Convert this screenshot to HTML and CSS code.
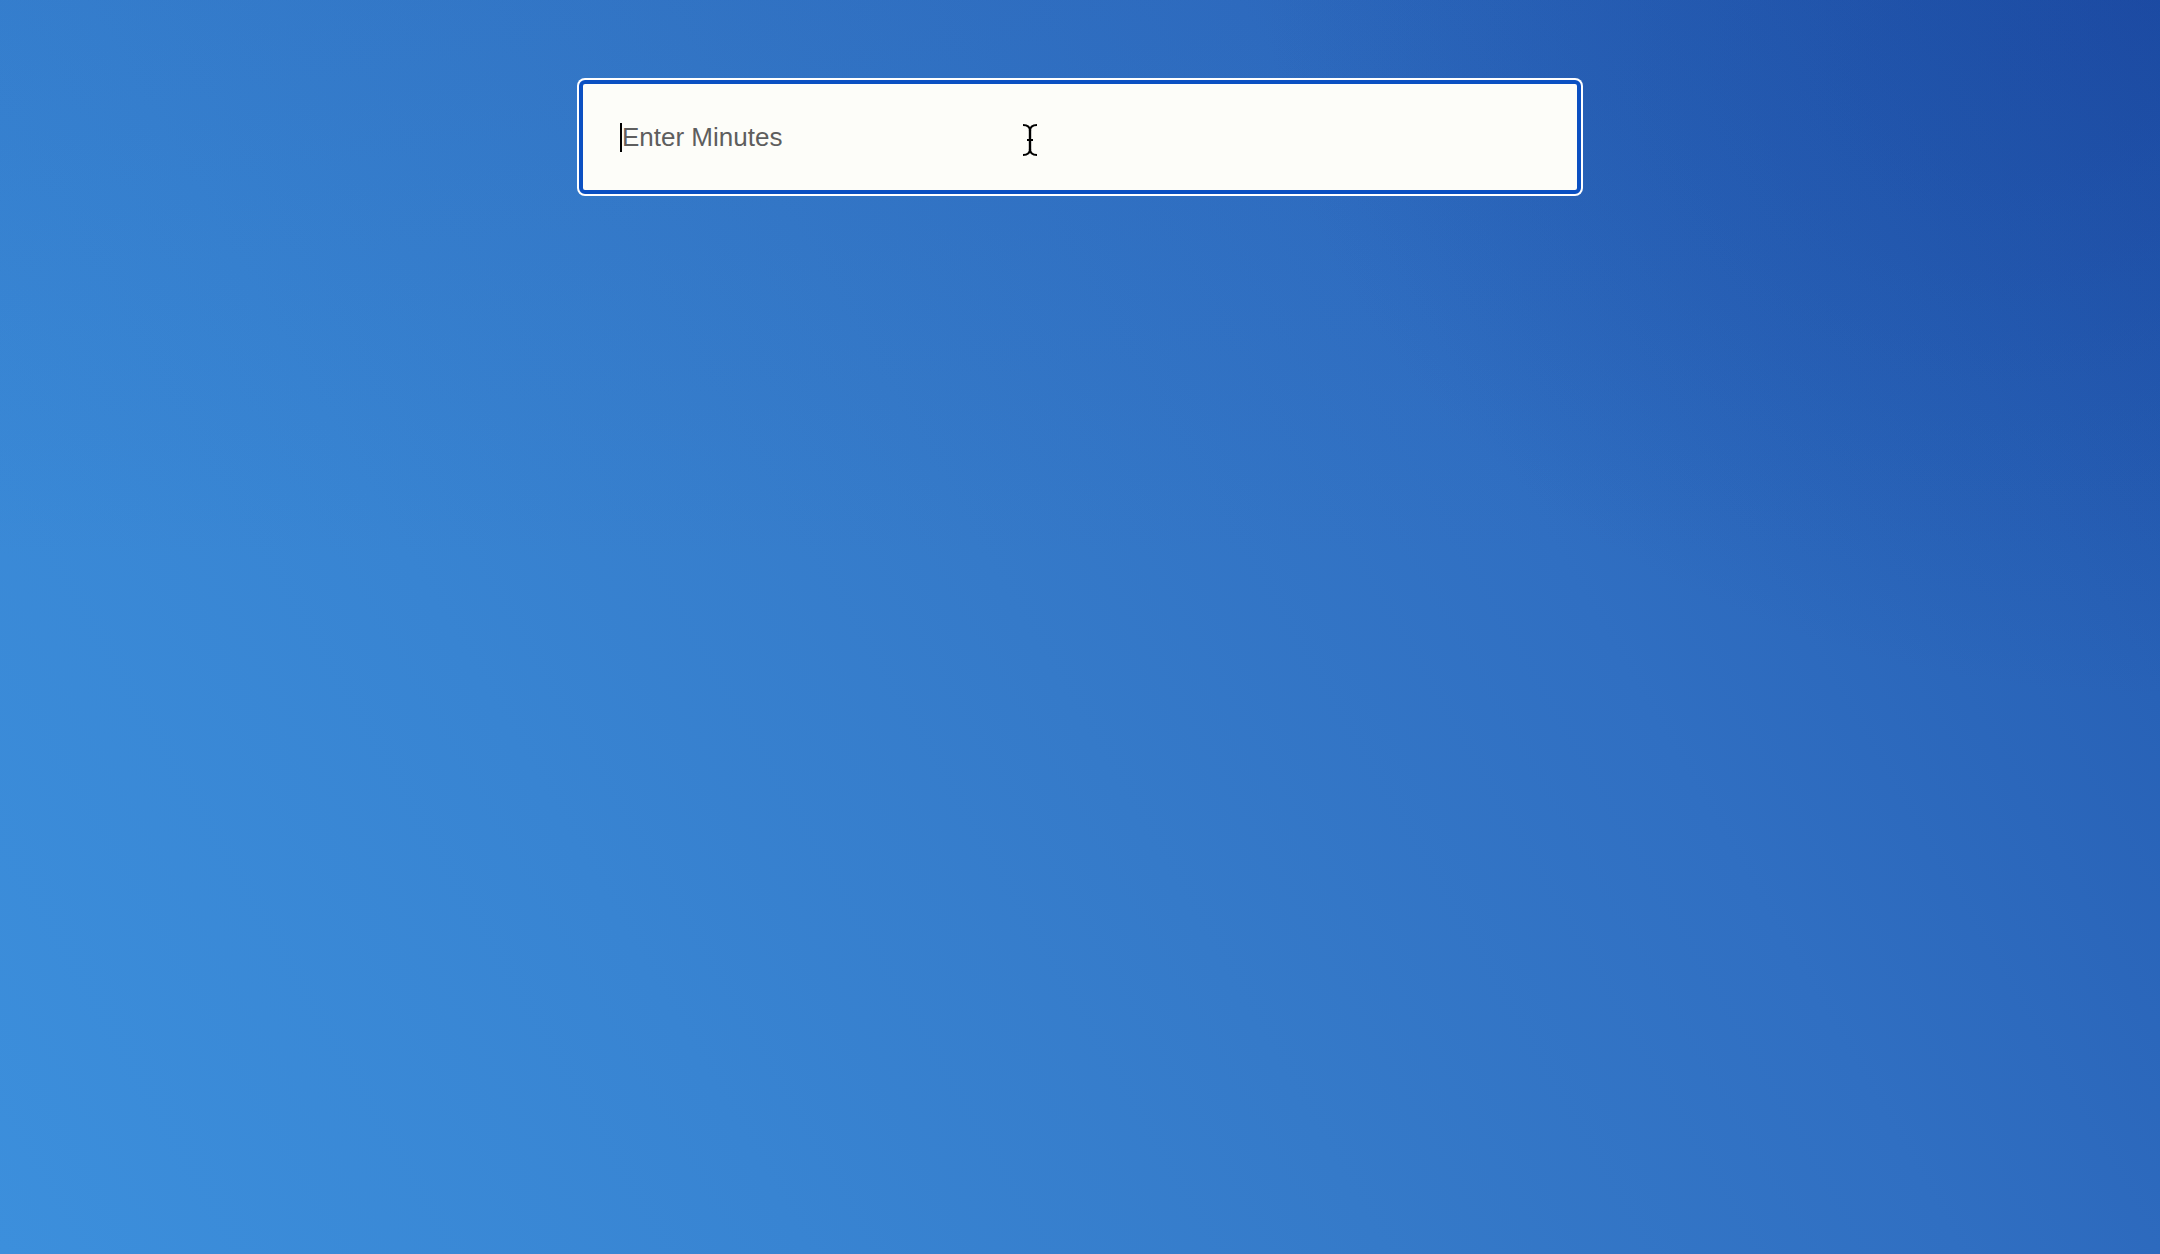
FILE: index.html
```html
<!DOCTYPE html>
<html lang="en">
<head>
<meta charset="utf-8">
<title>Timer</title>
<link rel="stylesheet" href="styles.css">
</head>
<body>
  <main class="page">
    <div class="field">
      <span class="caret"></span>
      <span class="placeholder">Enter Minutes</span>
      <svg class="ibeam" width="20" height="34" viewBox="0 0 20 34" aria-hidden="true">
        <path d="M3 2 Q10 2 10 8 Q10 2 17 2" fill="none" stroke="#000" stroke-width="2"/>
        <path d="M10 7 V27" stroke="#000" stroke-width="2.4"/>
        <path d="M7 17 H13" stroke="#000" stroke-width="2"/>
        <path d="M3 32 Q10 32 10 26 Q10 32 17 32" fill="none" stroke="#000" stroke-width="2"/>
      </svg>
    </div>
  </main>
</body>
</html>
```

FILE: styles.css
```css
html, body {
  margin: 0;
  padding: 0;
  height: 100%;
}

body {
  background:
    radial-gradient(ellipse 900px 700px at 100% 0%, rgba(20, 60, 150, 0.4), rgba(20, 60, 150, 0) 100%),
    linear-gradient(to bottom, rgba(25, 70, 160, 0.12), rgba(25, 70, 160, 0) 45%),
    linear-gradient(60deg, #3c8fdc 0%, #3884d2 28%, #357ac9 48%, #306fc2 68%, #2862b7 86%, #2256ac 100%);
  background-attachment: fixed;
  font-family: "Liberation Sans", Arial, sans-serif;
}

.page {
  display: flex;
  justify-content: center;
  padding-top: 80px;
  min-height: 100%;
  box-sizing: border-box;
}

.field {
  position: relative;
  width: 1002px;
  height: 114px;
  box-sizing: border-box;
  border: 4px solid #0b50c2;
  border-radius: 6px;
  box-shadow: 0 0 0 2px #ffffff;
  background: #fdfdf9;
  display: flex;
  align-items: center;
  padding-left: 37px;
}

.caret {
  width: 2px;
  height: 29px;
  background: #000;
}

.placeholder {
  font-size: 26px;
  color: #5e5e5e;
  line-height: 1;
}

.ibeam {
  position: absolute;
  left: 437px;
  top: 39px;
}
```
